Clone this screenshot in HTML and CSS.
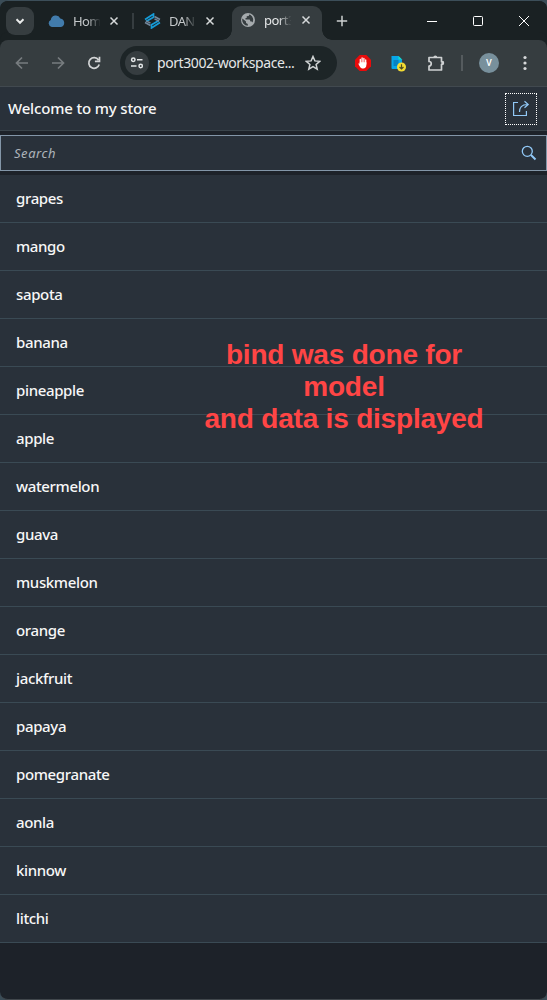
FILE: index.html
```html
<!DOCTYPE html>
<html lang="en">
<head>
<meta charset="utf-8">
<title>Welcome to my store</title>
<link rel="stylesheet" href="styles.css">
</head>
<body>
<div class="window">
  <div class="tabstrip">
    <div class="tab-search"><svg width="28" height="28" viewBox="0 0 28 28"><path d="M10.500 12.300l3.500 3.500 3.500-3.500" fill="none" stroke="#e8eaea" stroke-width="2"/></svg></div>
    <div class="tab tab-home">
      <svg class="favicon" width="17" height="12" viewBox="0 0 17 12"><path d="M3.800 12A3.700 3.700 0 0 1 2.800 5 5 5 0 0 1 12.300 3.400 4.400 4.400 0 0 1 13 12z" fill="#427cac"/></svg>
      <span class="tab-title">Hom</span>
      <svg class="x" width="10" height="10" viewBox="0 0 10 10"><path d="M1.500 1.500l7 7M8.500 1.500l-7 7"/></svg>
    </div>
    <div class="tab-sep"></div>
    <div class="tab tab-dan">
      <svg class="favicon" width="17" height="16" viewBox="0 0 17 16"><g fill="none" stroke-width="1.700"><path d="M1 6.500L9.500 1v3.200L2 8.500M16 9.500L7.500 15v-3.200L15 7.500" stroke="#159bd7"/><path d="M10.500 3.500L16 6.500M10.500 5.800l4.500 2.400M1 9.500l5.500 3M2 7.800l4.500 2.400" stroke="#72869a" stroke-width="1.500"/></g></svg>
      <span class="tab-title">DAN</span>
      <svg class="x" width="10" height="10" viewBox="0 0 10 10"><path d="M1.500 1.500l7 7M8.500 1.500l-7 7"/></svg>
    </div>
    <div class="tab tab-active">
      <svg class="favicon" width="14" height="14" viewBox="0 0 14 14"><circle cx="7" cy="7" r="7" fill="#a5aaad"/><path d="M1.400 5.500L5 8.500v1.400l1.800 1v1.800A5.700 5.700 0 0 1 1.400 5.500zM8 1.500L7.800 3 5.700 3.200v1.700H4.500v1.700h4.200l.8 1.800h1.300l.6 1.200A5.700 5.700 0 0 0 9.600 2z" fill="#363d40"/></svg>
      <span class="tab-title">port3</span>
      <svg class="x" width="10" height="10" viewBox="0 0 10 10"><path d="M1.500 1.500l7 7M8.500 1.500l-7 7"/></svg>
    </div>
    <svg class="new-tab" width="12" height="12" viewBox="0 0 12 12"><path d="M6 .8v10.400M.8 6h10.400" stroke="#cdd0d1" stroke-width="1.500"/></svg>
    <div class="win-controls">
      <svg width="12" height="12" viewBox="0 0 12 12"><path d="M1 6.500h10"/></svg>
      <svg width="12" height="12" viewBox="0 0 12 12"><rect x="1.500" y="1.500" width="9" height="9" rx="1"/></svg>
      <svg width="12" height="12" viewBox="0 0 12 12"><path d="M1 1l10 10M11 1L1 11"/></svg>
    </div>
  </div>
  <div class="toolbar">
    <svg class="nav" width="14" height="14" viewBox="0 0 14 14"><path d="M13 7H2M7 1.500L1.500 7 7 12.500" stroke="#777c7f"/></svg>
    <svg class="nav" width="14" height="14" viewBox="0 0 14 14"><path d="M1 7h11M7 1.500L12.500 7 7 12.500" stroke="#777c7f"/></svg>
    <svg class="nav" width="14" height="14" viewBox="0 0 14 14"><path d="M12.200 8.500A5.300 5.300 0 1 1 11.500 4M12.500 .7v4.600H7.900" stroke="#d2d4d5" stroke-width="1.700"/></svg>
    <div class="omnibox">
      <span class="site"><svg width="14" height="12" viewBox="0 0 14 12" fill="none" stroke="#e4e7e8" stroke-width="1.500"><circle cx="3.300" cy="2.800" r="1.700"/><path d="M7 2.800h5.500M1 9h5.500"/><circle cx="10.700" cy="9" r="1.700"/></svg></span>
      <span class="url">port3002-workspace...</span>
      <svg class="star" width="16" height="16" viewBox="0 0 16 16"><path d="M8 1.500l1.900 4.400 4.800.4-3.600 3.200 1.100 4.700L8 11.700l-4.200 2.500 1.100-4.700-3.600-3.200 4.800-.4z" fill="none" stroke="#d0d3d4" stroke-width="1.500"/></svg>
    </div>
    <svg class="ext-block" width="16" height="16" viewBox="0 0 16 16"><path d="M4.700 0h6.600L16 4.700v6.600L11.300 16H4.700L0 11.300V4.700z" fill="#ea0b0b"/><path d="M5.300 8V4.500M7.100 8V3M8.900 8V3.400M10.700 9V5" stroke="#fff" stroke-width="1.300" stroke-linecap="round"/><path d="M4.700 7.300h6.700v2.500c0 2.500-1.300 3.700-3.100 3.700-1.800 0-2.800-.8-3.800-2.600L3.300 8.700l.7-.5.700.6z" fill="#fff"/></svg>
    <svg class="ext-doc" width="17" height="17" viewBox="0 0 17 17"><path d="M1.500 1h7l3.500 3.500V14H2.500a1 1 0 0 1-1-1z" fill="#08a5e8"/><path d="M8.500 1v3.500H12z" fill="#16dfc2"/><path d="M3.500 6h5M3.500 8h5M3.500 10h4" stroke="#075e99"/><circle cx="11.500" cy="12" r="4.500" fill="#f4dc32"/><path d="M11.500 9.300v4.500M9.500 12l2 2 2-2" fill="none" stroke="#504e23" stroke-width="1.200"/></svg>
    <svg class="ext-puzzle" width="18" height="18" viewBox="0 0 18 18"><path d="M2 3.500h12.500v4.200h.6a1.300 1.300 0 0 1 0 2.600h-.6V16H2v-4c3 0 3-4.500 0-4.500z" fill="none" stroke="#ced1d2" stroke-width="1.700" stroke-linejoin="round"/><path d="M6.300 3.500a2 2 0 0 1 4 0zM14.500 7h.5a2 2 0 0 1 0 4h-.5z" fill="#ced1d2"/></svg>
    <i class="bar-sep"></i>
    <span class="avatar">V</span>
    <svg class="dots" width="4" height="16" viewBox="0 0 4 16" fill="#d7d9da"><circle cx="2" cy="2.500" r="1.600"/><circle cx="2" cy="8" r="1.600"/><circle cx="2" cy="13.500" r="1.600"/></svg>
  </div>
  <header class="store-header">
    <h1>Welcome to my store</h1>
    <button class="share" aria-label="Share"><svg width="18" height="17" viewBox="0 0 18 17" fill="none" stroke="#91c8f6" stroke-width="1.200"><path d="M6 2.500H1.600v13h12.800V11"/><path d="M7.500 12C7.500 7.500 9.500 4.500 15.500 4.500M12.500 1.300l3.700 3.200-3.700 3.200"/></svg></button>
  </header>
  <div class="search"><span>Search</span><svg width="16" height="16" viewBox="0 0 16 16" fill="none" stroke="#91c8f6"><circle cx="6.300" cy="6.300" r="5" stroke-width="1.300"/><path d="M10 10l4.500 4.500" stroke-width="2"/></svg></div>
  <ul class="list">
    <li>grapes</li><li>mango</li><li>sapota</li><li>banana</li><li>pineapple</li><li>apple</li><li>watermelon</li><li>guava</li><li>muskmelon</li><li>orange</li><li>jackfruit</li><li>papaya</li><li>pomegranate</li><li>aonla</li><li>kinnow</li><li>litchi</li>
  </ul>
  <p class="annotation">bind was done for<br>model<br>and data is displayed</p>
</div>
</body>
</html>
```
FILE: styles.css
```css
* { box-sizing: border-box; }
body { margin: 0; background: #3a4c57; font-family: "Noto Sans", "Open Sans", sans-serif; }
svg { display: block; flex: none; }
.window { position: relative; height: 1000px; overflow: hidden; background: #1d2229; border-top: 1px solid #3c4e59; border-bottom: 1px solid #41474c; border-radius: 8px; }
.tabstrip { height: 39px; display: flex; align-items: center; padding-left: 6px; background: #1a2123; }
.tab-search { width: 28px; height: 28px; border-radius: 9px; background: #363d40; margin-right: 14px; }
.tab { display: flex; align-items: center; color: #c4c8ca; }
.tab-home { width: 84px; }
.tab-home .x { margin-left: 7px; }
.tab-dan { width: 89px; }
.tab-dan .x { margin-left: 7px; }
.favicon { margin-right: 8px; }
.tab-title { width: 29px; font-size: 13px; line-height: 20px; letter-spacing: -.6px; white-space: nowrap; -webkit-mask-image: linear-gradient(90deg, #000 50%, transparent 95%); mask-image: linear-gradient(90deg, #000 50%, transparent 95%); }
.tab-active .tab-title { letter-spacing: -.5px; }
.x { margin-left: 8px; fill: none; stroke: #d6d9da; stroke-width: 1.500; }
.tab-sep { width: 2px; height: 16px; margin: 0 10px 0 0; background: #363d40; }
.tab-active { position: relative; z-index: 1; align-self: flex-end; width: 90px; height: 34px; margin-left: -1px; padding: 0 0 6px 9px; border-radius: 9px 9px 0 0; background: #363d40; color: #e5e7e8; }
.tab-active .favicon { margin-right: 9px; }
.tab-active::before, .tab-active::after { content: ""; position: absolute; bottom: 0; width: 10px; height: 10px; }
.tab-active::before { left: -10px; background: radial-gradient(circle at 0 0, transparent 9.500px, #363d40 10px); }
.tab-active::after { right: -10px; background: radial-gradient(circle at 100% 0, transparent 9.500px, #363d40 10px); }
.new-tab { margin-left: 14px; }
.win-controls { display: flex; gap: 34px; margin-left: auto; padding-right: 17px; fill: none; stroke: #fff; stroke-width: 1; }
.toolbar { height: 46px; display: flex; align-items: center; padding-left: 15px; background: #363d40; border-radius: 8px 8px 0 0; box-shadow: 0 -8px 0 #1a2123; }
.nav { margin-right: 22px; fill: none; stroke-width: 1.700; }
.omnibox { display: flex; align-items: center; width: 217px; height: 34px; margin-left: -3px; padding-left: 5px; border-radius: 17px; background: #1d2527; }
.site { display: grid; place-items: center; width: 24px; height: 24px; border-radius: 50%; background: #363d40; }
.url { width: 140px; margin-left: 8px; color: #e5e7e8; font-size: 14px; line-height: 20px; letter-spacing: -.42px; white-space: nowrap; }
.star { margin-left: 8px; }
.ext-block { margin-left: 18px; }
.ext-doc { margin-left: 19px; }
.ext-puzzle { margin-left: 20px; }
.bar-sep { width: 2px; height: 16px; margin-left: 16px; background: #555b5e; }
.avatar { width: 20px; height: 20px; margin-left: 16px; border-radius: 50%; background: #78909c; color: #fff; font: 500 9px/20px Roboto, sans-serif; text-align: center; }
.dots { margin-left: 24px; }
.store-header { display: flex; align-items: center; justify-content: space-between; height: 45px; padding: 0 10px 0 8px; background: #29313a; border-top: 1px solid #41494f; border-bottom: 1px solid #3a444b; }
.store-header h1 { margin: 0 0 2px; color: #f7f7f7; font-size: 15px; font-weight: 550; line-height: 20px; letter-spacing: -.16px; }
.share { display: grid; place-items: center; width: 32px; height: 32px; padding: 0; border: 1px dotted #fff; background: none; }
.search { display: flex; align-items: center; justify-content: space-between; height: 36px; margin: 4px 0; padding: 0 9px 0 13px; border: 1px solid #8396a8; background: #29313a; color: #adb4ba; font-size: 13px; font-style: italic; letter-spacing: .55px; }
.list { margin: 0; padding: 0; list-style: none; }
.list li { height: 48px; padding-left: 16px; border-bottom: 1px solid #3a4a54; background: #29313a; color: #f7f7f7; font-size: 15px; font-weight: 550; line-height: 47px; letter-spacing: -.36px; }
.annotation { position: absolute; left: 194px; top: 338px; width: 300px; margin: 0; color: #ff4545; font: bold 28px/32px "Liberation Sans", Arial, sans-serif; letter-spacing: -.2px; text-align: center; }
```
